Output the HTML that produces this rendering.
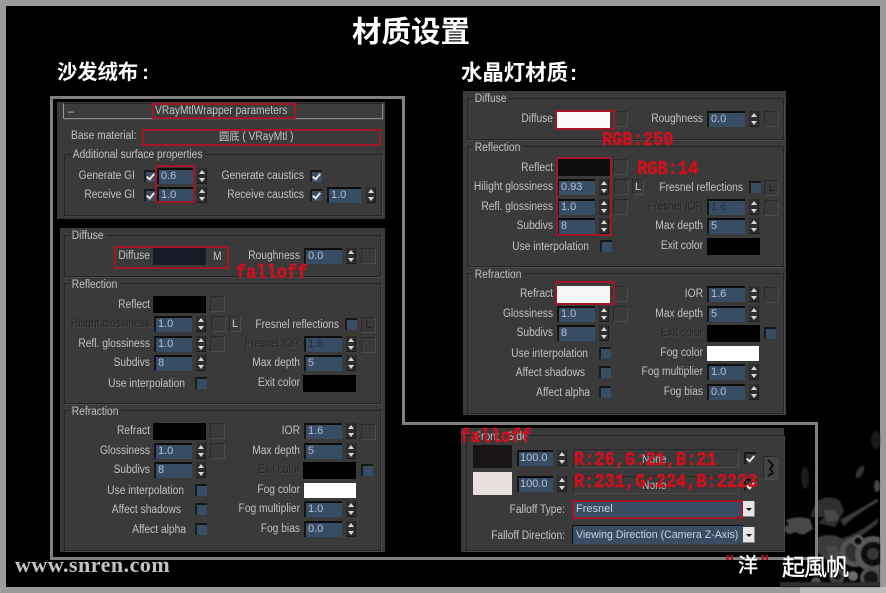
<!DOCTYPE html>
<html><head><meta charset="utf-8"><style>
html,body{margin:0;padding:0;background:#000}
#p{position:relative;width:886px;height:593px;overflow:hidden;background:#9a9a9a;font-family:"Liberation Sans","Noto Sans CJK SC",sans-serif}
#k{position:absolute;left:6px;top:6px;width:874px;height:581px;background:#000}
.w{position:absolute;left:0;top:0;width:0;height:0}
.pn{position:absolute;background:#3a3a3a}
.g{position:absolute;box-sizing:border-box;border:1px solid #262626;box-shadow:1px 1px 0 #4a4a4a}
.gl,.l,.r,.dl,.dr{position:absolute;white-space:nowrap;font-size:11.5px;line-height:14px;color:#c2c2c2;margin-top:2px}
.gl,.l,.dl{transform-origin:0 50%;transform:translateY(-50%) scaleX(.89)}
.r,.dr{transform-origin:100% 50%;transform:translate(-100%,-50%) scaleX(.89)}
.gl{background:#3a3a3a;padding:0 3px 0 2px}
.dl,.dr{color:#242424;text-shadow:1px 1px 0 #4c4c4c}
.f{position:absolute;box-sizing:border-box;height:16px;margin-top:-1px;background:#384c63;border-top:2px solid #0d0d0d;border-left:2px solid #151515;color:#b0c2d6;font-size:11px;line-height:12px;padding-left:2px;white-space:nowrap;overflow:hidden}
.a{position:absolute;width:10px;height:16px;margin-top:-1px;background:#2e2e2e;box-shadow:inset -1px -1px 0 #1c1c1c}
.a:before,.a:after{content:"";position:absolute;left:2px;border-left:3px solid transparent;border-right:3px solid transparent}
.a:before{top:2px;border-bottom:4px solid #d8d8d8}
.a:after{bottom:2px;border-top:4px solid #d8d8d8}
.b{position:absolute;box-sizing:border-box;width:15px;height:16px;border:1px solid #2a2a2a;border-right-color:#4c4c4c;border-bottom-color:#4c4c4c;color:#ccc;font-size:11px;line-height:14px;text-align:center}
.c{position:absolute;box-sizing:border-box;width:12px;height:12px;background:#384c63;border-top:2px solid #161616;border-left:2px solid #1c1c1c}
.c.k:after{content:"";position:absolute;left:2px;top:0;width:3px;height:6px;border:solid #e4e4e4;border-width:0 2px 2px 0;transform:rotate(40deg)}
.s{position:absolute;box-sizing:border-box;width:53px;height:17px;background:#000}
.q{position:absolute;box-sizing:border-box;border:2px solid #a3162a}
.x{position:absolute;white-space:nowrap;color:#d20f1e;font-weight:bold;font-family:"Liberation Mono",monospace;font-size:17px;-webkit-text-stroke:.4px #d20f1e;transform-origin:0 50%;transform:translateY(-50%) scaleY(1.15)}
.ti{position:absolute;white-space:nowrap;color:#fff;font-weight:bold}
.dd{position:absolute;width:12px;height:16px;background:#e6e6e6;box-shadow:inset -1px -1px 0 #888}
.dd:after{content:"";position:absolute;left:3px;top:7px;border-left:3px solid transparent;border-right:3px solid transparent;border-top:3px solid #111}
.ln{position:absolute;background:#808080}
#ui{position:absolute;left:0;top:0;width:886px;height:593px;filter:blur(.3px)}
</style></head><body><div id="p"><div id="k"></div>

<div style="position:absolute;left:800px;top:587px;width:86px;height:6px;background:#bdbdbd"></div>
<svg style="position:absolute;left:780px;top:430px;filter:blur(.7px);opacity:.8" width="100" height="157" viewBox="0 0 100 157">
<ellipse cx="25" cy="48" rx="4" ry="11" fill="#242424"/>
<ellipse cx="96" cy="10" rx="5" ry="9" fill="#222"/>
<ellipse cx="80" cy="42" rx="3" ry="7" fill="#444" transform="rotate(30 80 42)"/>
<ellipse cx="97" cy="56" rx="3" ry="6" fill="#555"/>
<path d="M36 72q12-9 24-1l4 10-9 16-17-4 6-6-14 0z" fill="#3c3c3c"/>
<path d="M6 90q12-5 24-1l3 10-10 6-8-3q-8 5-11-3 3-6 5-3z" fill="#5a5a5a"/>
<path d="M36 108q16-7 28 2l2 14-14 11-14-12z" fill="#4a4a4a"/>
<path d="M44 80l12 0 3 10-12 2zM46 116l11 0 3 10-10 3z" fill="#5a5a5a"/>
<path d="M60 90q18-10 38-22l0 4q-22 12-34 24z" fill="#4a4a4a"/>
<path d="M62 108q16-4 36-20v5q-18 16-34 20z" fill="#444"/>
<circle cx="75" cy="122" r="15" fill="#6a6a6a"/><circle cx="75" cy="122" r="10" fill="#3d3d3d"/>
<circle cx="93" cy="124" r="18" fill="#6e6e6e"/><circle cx="93" cy="124" r="12" fill="#111"/><circle cx="93" cy="124" r="6" fill="#444"/>
<circle cx="78" cy="111" r="6" fill="#777"/><circle cx="78" cy="111" r="3.5" fill="#0c0c0c"/>
<circle cx="57" cy="146" r="8" fill="#555"/><circle cx="57" cy="146" r="4" fill="#1c1c1c"/>
<circle cx="91" cy="148" r="11" fill="#666"/><circle cx="91" cy="148" r="7" fill="#1c1c1c"/>
<circle cx="36" cy="152" r="5" fill="#666"/>
<circle cx="73" cy="146" r="5" fill="#888"/>
<rect x="0" y="152" width="100" height="5" fill="#3a3a3a"/>
</svg>

<div class="ti" style="left:352px;top:15px;font-size:29.5px;line-height:36px">材质设置</div>
<div class="ti" style="left:57px;top:60px;font-size:20.3px;line-height:27px">沙发绒布<span style="margin-left:4px">:</span></div>
<div class="ti" style="left:461px;top:60px;font-size:21.4px;line-height:27px">水晶灯材质<span style="margin-left:2px">:</span></div>

<div class="ln" style="left:50px;top:96px;width:355px;height:3px"></div>
<div class="ln" style="left:50px;top:96px;width:3px;height:464px"></div>
<div class="ln" style="left:402px;top:96px;width:3px;height:329px"></div>
<div class="ln" style="left:402px;top:422px;width:416px;height:3px"></div>
<div class="ln" style="left:815px;top:422px;width:3px;height:138px"></div>
<div class="ln" style="left:50px;top:557px;width:768px;height:3px"></div>

<div id="ui">
<!-- wrapper panel -->
<div class="pn" style="left:57px;top:102px;width:328px;height:117px"></div>
<div class="g" style="left:63px;top:103px;width:320px;height:16px;background:#3c3c3c;border-color:#222 #888 #888 #999"></div>
<div class="l" style="left:68px;top:110px">–</div>
<div class="l" style="left:155px;top:109px">VRayMtlWrapper parameters</div>
<div class="q" style="left:152px;top:103px;width:144px;height:16px"></div>
<div class="l" style="left:71px;top:134px">Base material:</div>
<div class="l" style="left:219px;top:135px">圆底 ( VRayMtl )</div>
<div class="q" style="left:142px;top:129px;width:239px;height:17px"></div>
<div class="g" style="left:64px;top:154px;width:318px;height:62px"></div>
<div class="gl" style="left:71px;top:153px">Additional surface properties</div>
<div class="r" style="left:135px;top:174px">Generate GI</div>
<div class="c k" style="left:144px;top:170px"></div>
<div class="f" style="left:157px;top:169px;width:36px">0.6</div><div class="a" style="left:197px;top:169px"></div>
<div class="r" style="left:135px;top:193px">Receive GI</div>
<div class="c k" style="left:144px;top:189px"></div>
<div class="f" style="left:157px;top:188px;width:36px">1.0</div><div class="a" style="left:197px;top:188px"></div>
<div class="q" style="left:155px;top:165px;width:40px;height:38px"></div>
<div class="r" style="left:304px;top:174px">Generate caustics</div>
<div class="c k" style="left:310px;top:170px"></div>
<div class="r" style="left:304px;top:193px">Receive caustics</div>
<div class="c k" style="left:310px;top:189px"></div>
<div class="f" style="left:327px;top:188px;width:34px">1.0</div><div class="a" style="left:366px;top:188px"></div>

<!-- sofa panel -->
<div class="pn" style="left:60px;top:228px;width:325px;height:324px"></div>
<div class="g" style="left:64px;top:235px;width:317px;height:42px"></div><div class="gl" style="left:70px;top:234px">Diffuse</div>
<div class="r" style="left:150px;top:254px">Diffuse</div>
<div class="s" style="left:153px;top:248px;background:#171c28"></div>
<div class="l" style="left:213px;top:255px">M</div>
<div class="q" style="left:114px;top:246px;width:115px;height:23px"></div>
<div class="x" style="left:236px;top:274px">falloff</div>
<div class="r" style="left:300px;top:254px">Roughness</div>
<div class="f" style="left:304px;top:249px;width:38px">0.0</div><div class="a" style="left:346px;top:249px"></div><div class="b" style="left:361px;top:248px"></div>

<div class="g" style="left:64px;top:283px;width:317px;height:121px"></div><div class="gl" style="left:70px;top:283px">Reflection</div>
<div class="r" style="left:150px;top:303px">Reflect</div><div class="s" style="left:153px;top:296px"></div><div class="b" style="left:210px;top:296px"></div>
<div class="dr" style="left:150px;top:322px">Hilight glossiness</div><div class="f" style="left:154px;top:317px;width:38px">1.0</div><div class="a" style="left:196px;top:317px"></div><div class="b" style="left:211px;top:316px"></div><div class="b" style="left:229px;top:316px;width:12px">L</div>
<div class="r" style="left:339px;top:323px">Fresnel reflections</div><div class="c" style="left:345px;top:318px"></div><div class="b" style="left:361px;top:317px;color:#222">L</div>
<div class="r" style="left:150px;top:342px">Refl. glossiness</div><div class="f" style="left:154px;top:337px;width:38px">1.0</div><div class="a" style="left:196px;top:337px"></div><div class="b" style="left:210px;top:336px"></div>
<div class="dr" style="left:300px;top:342px">Fresnel IOR</div><div class="f" style="left:304px;top:337px;width:38px;color:#22303f">1.6</div><div class="a" style="left:346px;top:337px"></div><div class="b" style="left:361px;top:337px"></div>
<div class="r" style="left:150px;top:361px">Subdivs</div><div class="f" style="left:154px;top:356px;width:38px">8</div><div class="a" style="left:196px;top:356px"></div>
<div class="r" style="left:300px;top:361px">Max depth</div><div class="f" style="left:304px;top:356px;width:38px">5</div><div class="a" style="left:346px;top:356px"></div>
<div class="r" style="left:185px;top:382px">Use interpolation</div><div class="c" style="left:195px;top:377px"></div>
<div class="r" style="left:300px;top:381px">Exit color</div><div class="s" style="left:303px;top:375px"></div>

<div class="g" style="left:64px;top:410px;width:317px;height:141px"></div><div class="gl" style="left:70px;top:410px">Refraction</div>
<div class="r" style="left:150px;top:429px">Refract</div><div class="s" style="left:153px;top:423px"></div><div class="b" style="left:210px;top:423px"></div>
<div class="r" style="left:300px;top:429px">IOR</div><div class="f" style="left:304px;top:424px;width:38px">1.6</div><div class="a" style="left:346px;top:424px"></div><div class="b" style="left:361px;top:424px"></div>
<div class="r" style="left:150px;top:449px">Glossiness</div><div class="f" style="left:154px;top:444px;width:38px">1.0</div><div class="a" style="left:196px;top:444px"></div><div class="b" style="left:210px;top:443px"></div>
<div class="r" style="left:300px;top:449px">Max depth</div><div class="f" style="left:304px;top:444px;width:38px">5</div><div class="a" style="left:346px;top:444px"></div>
<div class="r" style="left:150px;top:468px">Subdivs</div><div class="f" style="left:154px;top:463px;width:38px">8</div><div class="a" style="left:196px;top:463px"></div>
<div class="dr" style="left:300px;top:468px">Exit color</div><div class="s" style="left:303px;top:462px"></div><div class="c" style="left:361px;top:464px"></div>
<div class="r" style="left:184px;top:489px">Use interpolation</div><div class="c" style="left:195px;top:484px"></div>
<div class="r" style="left:300px;top:488px">Fog color</div><div class="s" style="left:304px;top:483px;width:52px;height:15px;background:#fff"></div>
<div class="r" style="left:181px;top:508px">Affect shadows</div><div class="c" style="left:195px;top:503px"></div>
<div class="r" style="left:300px;top:507px">Fog multiplier</div><div class="f" style="left:304px;top:502px;width:38px">1.0</div><div class="a" style="left:346px;top:502px"></div>
<div class="r" style="left:186px;top:528px">Affect alpha</div><div class="c" style="left:195px;top:523px"></div>
<div class="r" style="left:300px;top:527px">Fog bias</div><div class="f" style="left:304px;top:522px;width:38px">0.0</div><div class="a" style="left:346px;top:522px"></div>

<!-- crystal panel -->
<div class="w" style="left:403px;top:-137px">
<div class="pn" style="left:60px;top:228px;width:323px;height:324px"></div>
<div class="g" style="left:64px;top:235px;width:317px;height:42px"></div><div class="gl" style="left:70px;top:234px">Diffuse</div>
<div class="r" style="left:150px;top:254px">Diffuse</div>
<div class="s" style="left:154px;top:248px;background:#fafafa"></div><div class="b" style="left:210px;top:248px"></div>
<div class="r" style="left:300px;top:254px">Roughness</div>
<div class="f" style="left:304px;top:249px;width:38px">0.0</div><div class="a" style="left:346px;top:249px"></div><div class="b" style="left:361px;top:248px"></div>

<div class="g" style="left:64px;top:283px;width:317px;height:121px"></div><div class="gl" style="left:70px;top:283px">Reflection</div>
<div class="r" style="left:150px;top:303px">Reflect</div><div class="s" style="left:154px;top:296px;background:#0e0e0e"></div><div class="b" style="left:210px;top:296px"></div>
<div class="r" style="left:150px;top:322px">Hilight glossiness</div><div class="f" style="left:154px;top:317px;width:38px">0.93</div><div class="a" style="left:196px;top:317px"></div><div class="b" style="left:211px;top:316px"></div><div class="b" style="left:229px;top:316px;width:12px">L</div>
<div class="r" style="left:340px;top:323px">Fresnel reflections</div><div class="c" style="left:346px;top:318px"></div><div class="b" style="left:361px;top:317px;color:#222">L</div>
<div class="r" style="left:150px;top:342px">Refl. glossiness</div><div class="f" style="left:154px;top:337px;width:38px">1.0</div><div class="a" style="left:196px;top:337px"></div><div class="b" style="left:210px;top:336px"></div>
<div class="dr" style="left:300px;top:342px">Fresnel IOR</div><div class="f" style="left:304px;top:337px;width:38px;color:#22303f">1.6</div><div class="a" style="left:346px;top:337px"></div><div class="b" style="left:361px;top:337px"></div>
<div class="r" style="left:150px;top:361px">Subdivs</div><div class="f" style="left:154px;top:356px;width:38px">8</div><div class="a" style="left:196px;top:356px"></div>
<div class="r" style="left:300px;top:361px">Max depth</div><div class="f" style="left:304px;top:356px;width:38px">5</div><div class="a" style="left:346px;top:356px"></div>
<div class="r" style="left:186px;top:382px">Use interpolation</div><div class="c" style="left:197px;top:377px"></div>
<div class="r" style="left:300px;top:381px">Exit color</div><div class="s" style="left:304px;top:375px"></div>

<div class="g" style="left:64px;top:410px;width:317px;height:141px"></div><div class="gl" style="left:70px;top:410px">Refraction</div>
<div class="r" style="left:150px;top:429px">Refract</div><div class="s" style="left:154px;top:423px;background:#f5f5f5"></div><div class="b" style="left:210px;top:423px"></div>
<div class="r" style="left:300px;top:429px">IOR</div><div class="f" style="left:304px;top:424px;width:38px">1.6</div><div class="a" style="left:346px;top:424px"></div><div class="b" style="left:361px;top:424px"></div>
<div class="r" style="left:150px;top:449px">Glossiness</div><div class="f" style="left:154px;top:444px;width:38px">1.0</div><div class="a" style="left:196px;top:444px"></div><div class="b" style="left:210px;top:443px"></div>
<div class="r" style="left:300px;top:449px">Max depth</div><div class="f" style="left:304px;top:444px;width:38px">5</div><div class="a" style="left:346px;top:444px"></div>
<div class="r" style="left:150px;top:468px">Subdivs</div><div class="f" style="left:154px;top:463px;width:38px">8</div><div class="a" style="left:196px;top:463px"></div>
<div class="dr" style="left:300px;top:468px">Exit color</div><div class="s" style="left:304px;top:462px"></div><div class="c" style="left:361px;top:464px"></div>
<div class="r" style="left:185px;top:489px">Use interpolation</div><div class="c" style="left:196px;top:484px"></div>
<div class="r" style="left:300px;top:488px">Fog color</div><div class="s" style="left:304px;top:483px;width:52px;height:15px;background:#fff"></div>
<div class="r" style="left:182px;top:508px">Affect shadows</div><div class="c" style="left:196px;top:503px"></div>
<div class="r" style="left:187px;top:528px">Affect alpha</div><div class="c" style="left:196px;top:523px"></div>
<div class="r" style="left:300px;top:507px">Fog multiplier</div><div class="f" style="left:304px;top:502px;width:38px">1.0</div><div class="a" style="left:346px;top:502px"></div>
<div class="r" style="left:300px;top:527px">Fog bias</div><div class="f" style="left:304px;top:522px;width:38px">0.0</div><div class="a" style="left:346px;top:522px"></div>
</div>
<div class="q" style="left:555px;top:110px;width:60px;height:20px"></div>
<div class="q" style="left:556px;top:157px;width:56px;height:79px"></div>
<div class="q" style="left:555px;top:281px;width:60px;height:24px"></div>
<div class="x" style="left:602px;top:141px">RGB:250</div>
<div class="x" style="left:637px;top:170px">RGB:14</div>

<!-- falloff panel -->
<div class="pn" style="left:461px;top:428px;width:323px;height:124px"></div>
<div class="g" style="left:466px;top:435px;width:318px;height:116px;border-right:0"></div>
<div class="gl" style="left:473px;top:435px">Front : Side</div>
<div class="s" style="left:473px;top:445px;width:39px;height:23px;background:#1a1515"></div>
<div class="s" style="left:473px;top:472px;width:39px;height:23px;background:#e7e0df"></div>
<div class="f" style="left:517px;top:451px;width:36px;padding-left:1px">100.0</div><div class="a" style="left:557px;top:451px"></div>
<div class="f" style="left:517px;top:477px;width:36px;padding-left:1px">100.0</div><div class="a" style="left:557px;top:477px"></div>
<div class="b" style="left:573px;top:449px;width:166px;height:19px"></div>
<div class="b" style="left:573px;top:476px;width:166px;height:18px"></div>
<div class="l" style="left:642px;top:458px">None</div>
<div class="l" style="left:642px;top:484px">None</div>
<div class="c k" style="left:744px;top:452px;background:#3a3a3a"></div>
<div class="c k" style="left:744px;top:479px;background:#3a3a3a"></div>
<div class="b" style="left:763px;top:456px;height:24px;background:#444"></div>
<svg style="position:absolute;left:764px;top:458px" width="14" height="20" viewBox="0 0 14 20"><path d="M4 2l5 5-3 4 3 4-5 3" fill="none" stroke="#111" stroke-width="2"/></svg>
<div class="r" style="left:565px;top:508px">Falloff Type:</div>
<div class="f" style="left:572px;top:502px;width:171px;height:17px;border:0;padding:2px 0 0 4px;color:#c8d3df;font-size:11px">Fresnel</div>
<div class="q" style="left:572px;top:500px;width:171px;height:19px"></div>
<div class="dd" style="left:743px;top:501px"></div>
<div class="r" style="left:565px;top:534px">Falloff Direction:</div>
<div class="f" style="left:572px;top:526px;width:171px;height:19px;border:0;border-left:1px solid #111;border-top:1px solid #111;padding:3px 0 0 3px;color:#c8d3df;font-size:10.6px">Viewing Direction (Camera Z-Axis)</div>
<div class="dd" style="left:743px;top:527px"></div>
<div class="x" style="left:460px;top:438px">falloff</div>
<div class="x" style="left:574px;top:461px">R:26,G:21,B:21</div>
<div class="x" style="left:574px;top:483px">R:231,G:224,B:2223</div>
</div>

<div style="position:absolute;left:15px;top:553px;font:bold 22px/24px 'Liberation Serif',serif;letter-spacing:.5px;color:#c4c4c4;white-space:nowrap">www.snren.com</div>
<div style="position:absolute;left:725px;top:553px;font:bold 20px/20px 'Liberation Sans',sans-serif;color:#a8101c">"</div>
<div style="position:absolute;left:760px;top:553px;font:bold 20px/20px 'Liberation Sans',sans-serif;color:#a8101c">"</div>
<div class="ti" style="left:738px;top:553px;font-size:20px;line-height:26px;font-weight:normal;-webkit-text-stroke:.4px #fff">洋</div>
<div class="ti" style="left:782px;top:553px;font-size:23px;line-height:28px;font-weight:normal;letter-spacing:-1px;-webkit-text-stroke:.4px #fff">起風帆</div>
</div></body></html>
